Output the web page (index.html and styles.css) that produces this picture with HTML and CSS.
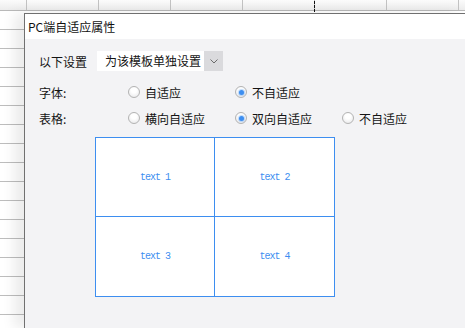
FILE: index.html
```html
<!DOCTYPE html>
<html lang="zh-CN">
<head>
    <meta charset="UTF-8">
    <meta name="viewport" content="width=device-width, initial-scale=1.0">
    <title>PC端自适应属性</title>
    <link rel="stylesheet" href="styles.css">
</head>
<body>
    <div class="sheet">
        <div class="col-head"></div>
        <div class="resize-cursor"></div>

        <div class="dialog">
            <div class="dialog-title">PC端自适应属性</div>
            <div class="dialog-body">
                <div class="row row-setting">
                    <span class="label label-setting">以下设置</span>
                    <div class="select">
                        <span class="select-text">为该模板单独设置</span>
                        <span class="select-arrow">
                            <svg width="8" height="5" viewBox="0 0 8 5"><polyline points="0.5,0.5 4,4 7.5,0.5" fill="none" stroke="#6b6b6b" stroke-width="1"/></svg>
                        </span>
                    </div>
                </div>

                <div class="row">
                    <span class="label">字体:</span>
                    <span class="radio"><span class="dot"></span>自适应</span>
                    <span class="radio checked"><span class="dot"></span>不自适应</span>
                </div>

                <div class="row">
                    <span class="label">表格:</span>
                    <span class="radio"><span class="dot"></span>横向自适应</span>
                    <span class="radio checked"><span class="dot"></span>双向自适应</span>
                    <span class="radio"><span class="dot"></span>不自适应</span>
                </div>

                <table class="preview">
                    <tr>
                        <td>text 1</td>
                        <td>text 2</td>
                    </tr>
                    <tr class="last-row">
                        <td>text 3</td>
                        <td>text 4</td>
                    </tr>
                </table>
            </div>
        </div>
    </div>
</body>
</html>
```

FILE: styles.css
```css
body {
    margin: 0;
    padding: 0;
    font-family: 'Noto Sans CJK SC', 'Noto Sans', sans-serif;
    font-size: 12px;
    color: #141414;
    background-color: #fff;
    overflow: hidden;
}

.sheet {
    position: relative;
    width: 465px;
    height: 328px;
    background-image: linear-gradient(#bdbdbd 1px, transparent 1px);
    background-size: 100% 19px;
    background-position: 0 10px;
}

.col-head {
    height: 10px;
    border-bottom: 1px solid #b9b9b9;
    background-image:
        linear-gradient(90deg, #c2c2c2 1px, transparent 1px),
        linear-gradient(#fbfbfb, #ececec);
    background-size: 72px 100%, 100% 100%;
    background-position: 26px 0, 0 0;
}

.resize-cursor {
    position: absolute;
    left: 314px;
    top: 1px;
    width: 1px;
    height: 12px;
    background: repeating-linear-gradient(#111 0, #111 3px, transparent 3px, transparent 4px);
}

/* the dialog window sits over the sheet */
.dialog {
    position: absolute;
    left: 24px;
    top: 13px;
    right: 0;
    bottom: 0;
    border-left: 1px solid #707070;
    border-top: 1px solid #707070;
    box-shadow: -10px 0 12px rgba(0, 0, 0, 0.08);
    display: flex;
    flex-direction: column;
}

.dialog-title {
    height: 25px;
    line-height: 25px;
    padding-left: 3px;
    background-color: #fff;
    color: #111;
}

.dialog-body {
    flex: 1;
    background-color: #f3f3f5;
    padding: 12px 0 0 14px;
}

.row {
    display: flex;
    align-items: center;
    height: 26px;
}

.row-setting {
    height: 20px;
    margin-bottom: 8px;
}

.label {
    width: 89px;
    flex: none;
}

.label-setting {
    width: 58px;
}

.select {
    display: flex;
    width: 126px;
    height: 20px;
    background-color: #fff;
}

.select-text {
    flex: 1;
    line-height: 20px;
    padding-left: 8px;
}

.select-arrow {
    width: 19px;
    background-color: #dadadd;
    display: flex;
    align-items: center;
    justify-content: center;
}

.radio {
    display: flex;
    align-items: center;
    width: 107px;
    flex: none;
}

.dot {
    width: 10px;
    height: 10px;
    margin-right: 5px;
    border: 1px solid #b3b3b3;
    border-radius: 50%;
    background: radial-gradient(circle at 50% 35%, #ffffff 30%, #e4e4e6 100%);
    position: relative;
}

.radio.checked .dot::after {
    content: '';
    position: absolute;
    left: 2.5px;
    top: 2.5px;
    width: 5px;
    height: 5px;
    border-radius: 50%;
    background-color: #3d8ef0;
    box-shadow: 0 0 1px 1px rgba(61, 142, 240, 0.35);
}

.preview {
    margin: 6px 0 0 56px;
    border-collapse: collapse;
    background-color: #fff;
}

.preview td {
    width: 118px;
    height: 78px;
    border: 1px solid #3d8ef0;
    text-align: center;
    color: #3d8ef0;
    font-family: 'Liberation Mono', monospace;
    font-size: 10px;
    letter-spacing: -1px;
    padding: 0;
}

.preview td + td {
    width: 119px;
}

.preview .last-row td {
    height: 79px;
}
```
